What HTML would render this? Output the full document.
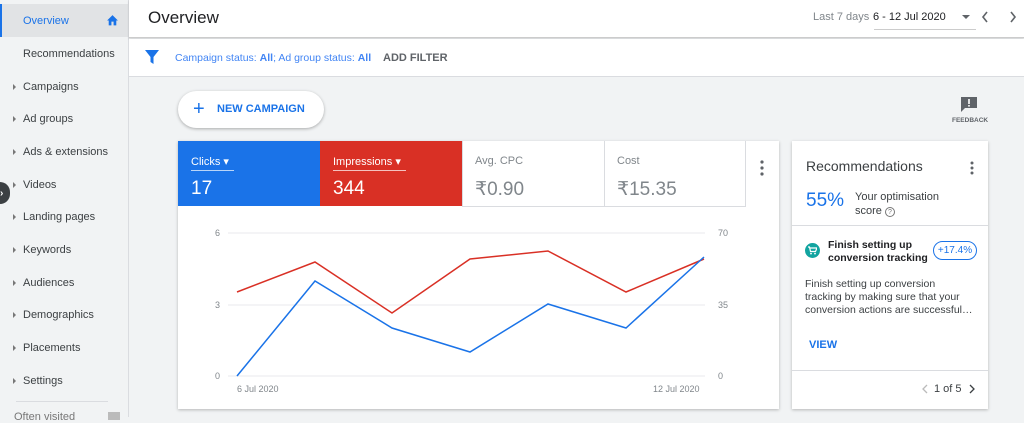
<!DOCTYPE html>
<html><head><style>
*{margin:0;padding:0;box-sizing:border-box}
body{width:1024px;height:417px;overflow:hidden;font-family:"Liberation Sans",Arial,sans-serif;background:#f1f3f4;position:relative;color:#3c4043}
.side{position:absolute;left:0;top:0;width:129px;height:417px;background:#f1f3f4;border-right:1px solid #dadce0}
.item{position:absolute;left:23px;font-size:11px;color:#3c4043}
.tri{position:absolute;left:13px;width:0;height:0;border-left:3px solid #777;border-top:3px solid transparent;border-bottom:3px solid transparent}
.abs{position:absolute}
</style></head><body>
<div class="side">
 <div class="abs" style="left:0;top:4px;width:128px;height:33px;background:#e1e3e5;border-left:2px solid #1a73e8"></div>
 <div class="item" style="top:15px;color:#1a73e8">Overview</div>
 <svg class="abs" style="left:106px;top:14px" width="13" height="12" viewBox="0 0 24 22"><path d="M10 21v-7h4v7h5v-9h3L12 2 2 12h3v9z" fill="#1a73e8"/></svg>
 <div class="item" style="top:48px">Recommendations</div>
 <div class="item" style="top:81px">Campaigns</div><div class="tri" style="top:84px"></div>
 <div class="item" style="top:113px">Ad groups</div><div class="tri" style="top:116px"></div>
 <div class="item" style="top:146px">Ads &amp; extensions</div><div class="tri" style="top:149px"></div>
 <div class="item" style="top:179px">Videos</div><div class="tri" style="top:182px"></div>
 <div class="item" style="top:211px">Landing pages</div><div class="tri" style="top:214px"></div>
 <div class="item" style="top:244px">Keywords</div><div class="tri" style="top:247px"></div>
 <div class="item" style="top:277px">Audiences</div><div class="tri" style="top:280px"></div>
 <div class="item" style="top:309px">Demographics</div><div class="tri" style="top:312px"></div>
 <div class="item" style="top:342px">Placements</div><div class="tri" style="top:345px"></div>
 <div class="item" style="top:375px">Settings</div><div class="tri" style="top:378px"></div>
 <div class="abs" style="left:16px;top:401px;width:92px;height:1px;background:#dadce0"></div>
 <div class="item" style="left:14px;top:411px;color:#777">Often visited</div>
 <div class="abs" style="left:108px;top:412px;width:12px;height:8px;background:#bbb"></div>
</div>
<div class="abs" style="left:-10px;top:182px;width:20px;height:22px;border-radius:11px;background:#3c4043"></div>
<div class="abs" style="left:0;top:188px;color:#fff;font-size:10px;font-weight:bold">›</div>

<div class="abs" style="left:129px;top:0;width:895px;height:38px;background:#fff;border-bottom:1px solid #ccc;box-shadow:0 1px 2px rgba(0,0,0,.15)"></div>
<div class="abs" style="left:148px;top:8px;font-size:17px;color:#202124">Overview</div>
<div class="abs" style="left:813px;top:11px;font-size:11px;color:#80868b">Last 7 days</div>
<div class="abs" style="left:873px;top:11px;font-size:11px;color:#202124">6 - 12 Jul 2020</div>
<div class="abs" style="left:874px;top:29px;width:102px;height:1px;background:#ccc"></div>
<div class="abs" style="left:962px;top:15px;border-top:4px solid #5f6368;border-left:4px solid transparent;border-right:4px solid transparent"></div>
<svg class="abs" style="left:981px;top:11px" width="8" height="12"><path d="M6 1L2 6l4 5" fill="none" stroke="#5f6368" stroke-width="1.6"/></svg>
<svg class="abs" style="left:1009px;top:11px" width="8" height="12"><path d="M2 1l4 5-4 5" fill="none" stroke="#5f6368" stroke-width="1.6"/></svg>

<div class="abs" style="left:129px;top:39px;width:895px;height:38px;background:#fff;border-bottom:1px solid #dadce0"></div>
<svg class="abs" style="left:145px;top:50px" width="14" height="14" viewBox="0 0 14 14"><path d="M0 0h14L8.5 7v7L5.5 12V7z" fill="#1a73e8"/></svg>
<div class="abs" style="left:175px;top:52px;font-size:10.5px;color:#4285f4">Campaign status: <b>All</b>; Ad group status: <b>All</b></div>
<div class="abs" style="left:383px;top:52px;font-size:11px;color:#5f6368;font-weight:bold">ADD FILTER</div>

<div class="abs" style="left:178px;top:91px;width:146px;height:37px;border-radius:19px;background:#fff;box-shadow:0 1px 3px rgba(0,0,0,.3)"></div>
<div class="abs" style="left:193px;top:98px;font-size:20px;color:#1a73e8">+</div>
<div class="abs" style="left:217px;top:103px;font-size:11px;color:#1a73e8;font-weight:bold">NEW CAMPAIGN</div>

<svg class="abs" style="left:960px;top:96px" width="18" height="16" viewBox="0 0 18 16"><path d="M1 1h16v11H5l-4 4z" fill="#5f6368"/><rect x="8.2" y="3" width="1.6" height="5" fill="#fff"/><rect x="8.2" y="9" width="1.6" height="1.6" fill="#fff"/></svg>
<div class="abs" style="left:952px;top:117px;font-size:6.5px;color:#5f6368;font-weight:bold">FEEDBACK</div>

<div class="abs" style="left:178px;top:141px;width:601px;height:268px;background:#fff;box-shadow:0 1px 3px rgba(0,0,0,.25)"></div>
<div class="abs" style="left:178px;top:141px;width:142px;height:65px;background:#1a73e8"></div>
<div class="abs" style="left:320px;top:141px;width:142px;height:65px;background:#d93025"></div>
<div class="abs" style="left:462px;top:141px;width:1px;height:65px;background:#dadce0"></div>
<div class="abs" style="left:604px;top:141px;width:1px;height:65px;background:#dadce0"></div>
<div class="abs" style="left:745px;top:141px;width:1px;height:65px;background:#dadce0"></div>
<div class="abs" style="left:462px;top:206px;width:284px;height:1px;background:#dadce0"></div>
<div class="abs" style="left:191px;top:155px;font-size:11px;color:#fff;border-bottom:1px solid rgba(255,255,255,.7);padding-bottom:2px;width:43px">Clicks ▾</div>
<div class="abs" style="left:191px;top:178px;font-size:19px;color:#fff">17</div>
<div class="abs" style="left:333px;top:155px;font-size:11px;color:#fff;border-bottom:1px solid rgba(255,255,255,.7);padding-bottom:2px;width:73px">Impressions ▾</div>
<div class="abs" style="left:333px;top:178px;font-size:19px;color:#fff">344</div>
<div class="abs" style="left:475px;top:155px;font-size:11px;color:#80868b">Avg. CPC</div>
<div class="abs" style="left:475px;top:178px;font-size:19px;color:#80868b">₹0.90</div>
<div class="abs" style="left:617px;top:155px;font-size:11px;color:#80868b">Cost</div>
<div class="abs" style="left:617px;top:178px;font-size:19px;color:#80868b">₹15.35</div>
<svg class="abs" style="left:760px;top:160px" width="4" height="16"><circle cx="2" cy="2" r="1.6" fill="#5f6368"/><circle cx="2" cy="8" r="1.6" fill="#5f6368"/><circle cx="2" cy="14" r="1.6" fill="#5f6368"/></svg>

<svg class="abs" style="left:178px;top:206px" width="601" height="203">
<g stroke="#e8eaed"><line x1="50" y1="27" x2="527" y2="27"/><line x1="50" y1="99" x2="527" y2="99"/><line x1="50" y1="170" x2="527" y2="170"/></g>
<g font-size="9" fill="#80868b" font-family="Liberation Sans"><text x="37" y="30">6</text><text x="37" y="102">3</text><text x="37" y="173">0</text><text x="540" y="30">70</text><text x="540" y="102">35</text><text x="540" y="173">0</text><text x="59" y="186">6 Jul 2020</text><text x="475" y="186">12 Jul 2020</text></g>
<polyline points="59,86 137,56 214,107 292,53 370,45 448,86 526,53" fill="none" stroke="#d93025" stroke-width="1.5"/>
<polyline points="59,170 137,75 214,122 292,146 370,98 448,122 526,51" fill="none" stroke="#1a73e8" stroke-width="1.5"/>
</svg>

<div class="abs" style="left:792px;top:141px;width:196px;height:268px;background:#fff;box-shadow:0 1px 3px rgba(0,0,0,.25)"></div>
<div class="abs" style="left:806px;top:158px;font-size:14px;color:#3c4043">Recommendations</div>
<svg class="abs" style="left:970px;top:161px" width="4" height="14"><circle cx="2" cy="2" r="1.5" fill="#5f6368"/><circle cx="2" cy="7" r="1.5" fill="#5f6368"/><circle cx="2" cy="12" r="1.5" fill="#5f6368"/></svg>
<div class="abs" style="left:806px;top:190px;font-size:19px;color:#1a73e8">55%</div>
<div class="abs" style="left:855px;top:190px;font-size:11px;line-height:14px;color:#3c4043">Your optimisation<br>score <span style="display:inline-block;width:10px;height:10px;border:1px solid #777;border-radius:50%;font-size:7px;text-align:center;line-height:9px;color:#777">?</span></div>
<div class="abs" style="left:792px;top:225px;width:196px;height:1px;background:#dadce0"></div>
<div class="abs" style="left:805px;top:243px;width:15px;height:15px;border-radius:50%;background:#12a4a0"></div>
<svg class="abs" style="left:808px;top:246px" width="9" height="9" viewBox="0 0 9 9"><path d="M0 1h1.5l1 4.5h5L9 2H2.2" fill="none" stroke="#fff" stroke-width="1.2"/><circle cx="3" cy="7.6" r=".9" fill="#fff"/><circle cx="7" cy="7.6" r=".9" fill="#fff"/></svg>
<div class="abs" style="left:828px;top:239px;font-size:10.5px;line-height:13px;font-weight:bold;color:#202124">Finish setting up<br>conversion tracking</div>
<div class="abs" style="left:933px;top:241px;width:44px;height:19px;border:1px solid #1a73e8;border-radius:10px;font-size:10px;color:#1a73e8;text-align:center;line-height:17px">+17.4%</div>
<div class="abs" style="left:805px;top:278px;font-size:10.5px;line-height:13px;color:#3c4043">Finish setting up conversion<br>tracking by making sure that your<br>conversion actions are successful…</div>
<div class="abs" style="left:809px;top:339px;font-size:11px;font-weight:bold;color:#1a73e8">VIEW</div>
<div class="abs" style="left:792px;top:370px;width:196px;height:1px;background:#dadce0"></div>
<svg class="abs" style="left:922px;top:384px" width="6" height="10"><path d="M5 1L1 5l4 4" fill="none" stroke="#bbb" stroke-width="1.3"/></svg>
<div class="abs" style="left:934px;top:383px;font-size:11px;color:#3c4043">1 of 5</div>
<svg class="abs" style="left:969px;top:384px" width="6" height="10"><path d="M1 1l4 4-4 4" fill="none" stroke="#3c4043" stroke-width="1.3"/></svg>
</body></html>
